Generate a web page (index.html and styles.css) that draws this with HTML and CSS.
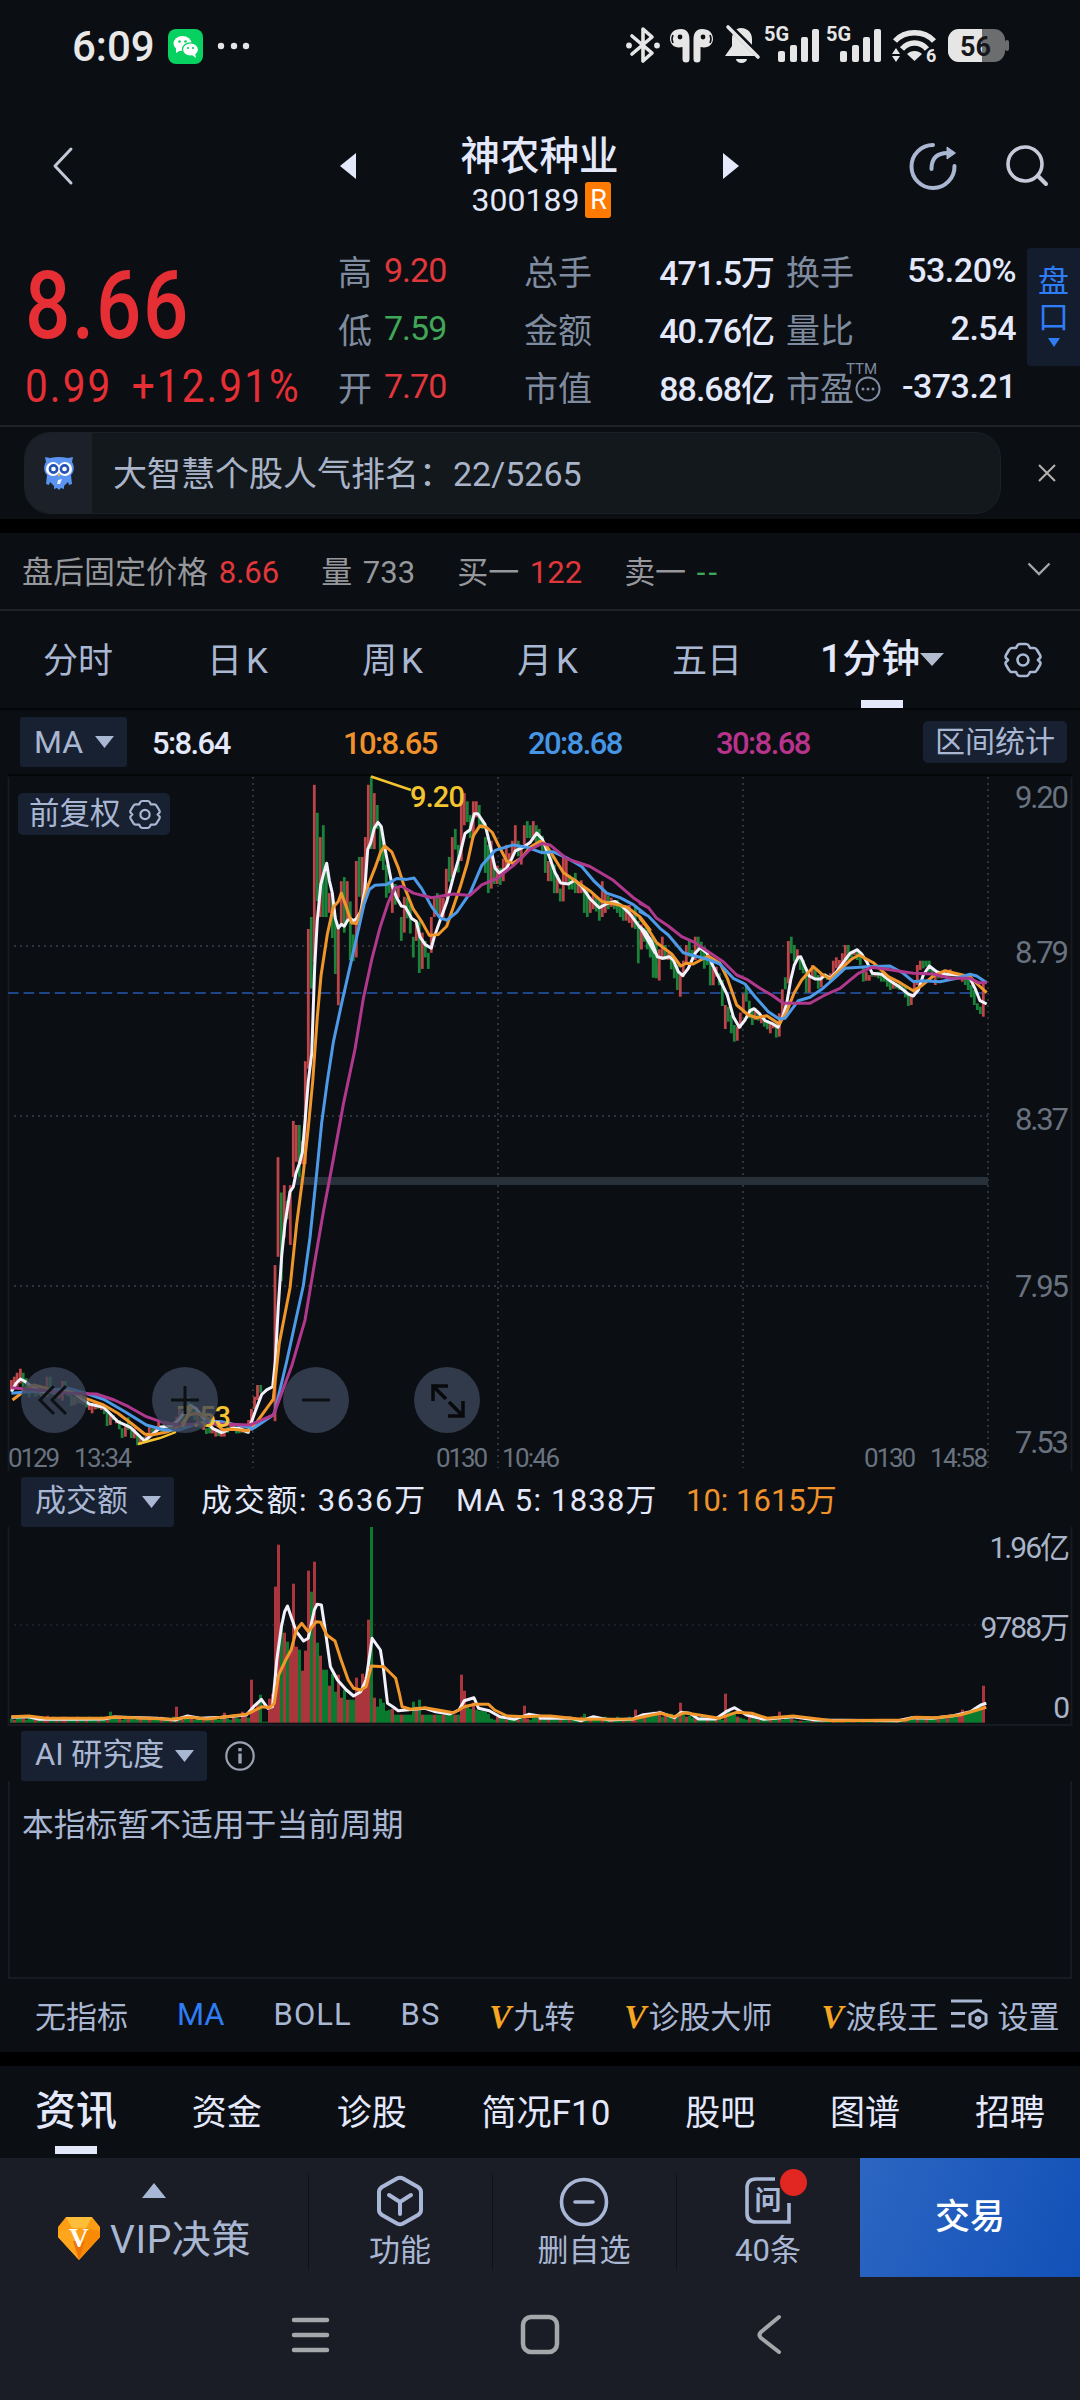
FILE: index.html
```html
<!DOCTYPE html>
<html lang="zh-CN">
  <head>
    <meta charset="UTF-8" />
    <title>神农种业 300189</title>
    <link rel="stylesheet" href="styles.css">
  </head>
  <body>
    <div class="status">
      <span class="clock">6:09</span>
      <svg class="wechat" width="35" height="35" viewBox="0 0 35 35">
        <rect width="35" height="35" rx="8" fill="#07d160"/>
        <ellipse cx="14.5" cy="14.5" rx="9" ry="7.5" fill="#fff"/>
        <path d="M8 19l0 5 5-3z" fill="#fff"/>
        <ellipse cx="22.5" cy="20.5" rx="8" ry="6.7" fill="#fff" stroke="#07d160" stroke-width="1.2"/>
        <path d="M24 26l4 3-1-5z" fill="#fff"/>
        <g fill="#07d160"><circle cx="11.5" cy="12.5" r="1.3"/><circle cx="17.5" cy="12.5" r="1.3"/><circle cx="20" cy="19" r="1.1"/><circle cx="25" cy="19" r="1.1"/></g>
      </svg>
      <svg class="dots" width="34" height="8" viewBox="0 0 34 8" fill="#e4e4e4"><circle cx="4" cy="4" r="3.2"/><circle cx="17" cy="4" r="3.2"/><circle cx="29" cy="4" r="3.2"/></svg>
      <svg class="sys" width="390" height="76" viewBox="624 8 390 76" fill="#e6e6e6">
        <path d="M632 36l20 17-9 8V29l9 8-20 17" fill="none" stroke="#e6e6e6" stroke-width="3.6" stroke-linejoin="round" stroke-linecap="round"/>
        <circle cx="629" cy="45.500" r="2.900"/><circle cx="657" cy="45.500" r="2.900"/>
        <path d="M681 29c6 0 8.500 4 8.500 11v19a3 3 0 0 1-7 0V47c-8 2-12.500-3-12.500-8 0-6 4-10 11-10zM702 29c-6 0-8.500 4-8.500 11v19a3 3 0 0 0 7 0V47c8 2 12.500-3 12.500-8 0-6-4-10-11-10z"/>
        <circle cx="680" cy="37" r="2.400" fill="#0b0e13"/><circle cx="703" cy="37" r="2.400" fill="#0b0e13"/>
        <path d="M673 35q-2 4 0 8M710 35q2 4 0 8" fill="none" stroke="#0b0e13" stroke-width="1.600"/>
        <path d="M741 28c7 0 11 5 11 11v9l6 8h-33l7-10v-7c0-6 3-11 9-11zM736 59h11a5.500 4 0 0 1-11 0z"/>
        <path d="M730 27l32 32" stroke="#0b0e13" stroke-width="6"/>
        <path d="M728 27l30 30" stroke="#e6e6e6" stroke-width="3.600" stroke-linecap="round"/>
        <text x="764" y="41" class="g5">5G</text><text x="826" y="41" class="g5">5G</text>
        <g id="bars"><rect x="778" y="51" width="7" height="11" rx="2"/><rect x="790" y="45" width="7" height="17" rx="2"/><rect x="801" y="37" width="7" height="25" rx="2"/><rect x="812" y="29" width="7" height="33" rx="2"/></g>
        <use href="#bars" x="62"/>
        <g fill="none" stroke="#e6e6e6" stroke-width="5.500"><path d="M895 41c10-11 29-11 39 0"/><path d="M902 49c7-8 18-8 25 0"/></g>
        <path d="M907 54c4-4 11-4 15 0l-7.500 7z"/>
        <path d="M896 48l4 6h-8zM896 62l4-6h-8z"/>
        <text x="926" y="62" class="w6">6</text>
        <rect x="948" y="29" width="57" height="33" rx="11" fill="#6c6d6f"/>
        <path d="M959 29h23v33h-23a11 11 0 0 1-11-11V40a11 11 0 0 1 11-11z"/>
        <rect x="1005" y="40" width="4" height="11" rx="2" fill="#6c6d6f"/>
        <text x="960" y="56" class="bat">56</text>
      </svg>
    </div>

    <div class="header">
      <svg class="back" width="24" height="40" viewBox="0 0 24 40"><path d="M20 3L4 20l16 17" fill="none" stroke="#c3c8d6" stroke-width="3" stroke-linecap="round" stroke-linejoin="round"/></svg>
      <svg width="16" height="26" viewBox="0 0 16 26"><path d="M16 0v26L0 13z" fill="#e3e8fb"/></svg>
      <div class="name">
        <h1>神农种业</h1>
        <p><span>300189</span><b>R</b></p>
      </div>
      <svg width="16" height="26" viewBox="0 0 16 26"><path d="M0 0v26l16-13z" fill="#e3e8fb"/></svg>
      <svg class="share" width="50" height="50" viewBox="0 0 50 50">
        <path d="M25 4A21.500 21.500 0 1 0 46.500 25" fill="none" stroke="#a9b7d2" stroke-width="4" stroke-linecap="round"/>
        <path d="M23.500 28c0-10 5-16 16-16" fill="none" stroke="#a9b7d2" stroke-width="4" stroke-linecap="round"/>
        <path d="M39 6l8.500 6-8.500 6z" fill="#a9b7d2" stroke="#a9b7d2" stroke-linejoin="round"/>
      </svg>
      <svg class="search" width="46" height="44" viewBox="0 0 46 44"><circle cx="21" cy="20" r="17" fill="none" stroke="#c9cad9" stroke-width="3.600"/><path d="M34 32l8 8" stroke="#c9cad9" stroke-width="4" stroke-linecap="round"/></svg>
    </div>

    <div class="quote">
      <div class="price">
        <div class="last">8.66</div>
        <div class="chg"><span>0.99</span><span>+12.91%</span></div>
      </div>
      <div class="col a">
        <p><i>高</i><b class="up">9.20</b></p>
        <p><i>低</i><b class="down">7.59</b></p>
        <p><i>开</i><b class="up">7.70</b></p>
      </div>
      <div class="col b">
        <p><i>总手</i><b>471.5万</b></p>
        <p><i>金额</i><b>40.76亿</b></p>
        <p><i>市值</i><b>88.68亿</b></p>
      </div>
      <div class="col c">
        <p><i>换手</i><b>53.20%</b></p>
        <p><i>量比</i><b>2.54</b></p>
        <p><i>市盈<svg class="ttm" width="36" height="52" viewBox="0 -6 36 52"><text x="0" y="12">TTM</text><circle cx="22" cy="27" r="11.500" fill="none" stroke="#7f8b9e" stroke-width="2"/><g fill="#7f8b9e"><circle cx="17" cy="27" r="1.500"/><circle cx="22" cy="27" r="1.500"/><circle cx="27" cy="27" r="1.500"/></g></svg></i><b>-373.21</b></p>
      </div>
      <div class="pankou"><span>盘</span><span>口</span><svg width="12" height="9" viewBox="0 0 12 9"><path d="M0 0h12L6 9z" fill="#2f7df6"/></svg></div>
    </div>

    <div class="banner">
      <div class="pill">
        <div class="owl">
          <svg width="32" height="34" viewBox="0 0 32 34">
            <path d="M2 1l5 1q9-2 18 0l5-1-1 5c3 5 2 10-1 13l1 9-3 1-1-3-4 4v3l-3-1-2 2-2-2-3 1v-3l-4-4-1 3-3-1 1-9C1 16 0 11 3 6z" fill="#5b93f0"/>
            <circle cx="10" cy="13" r="7" fill="#fff"/><circle cx="22" cy="13" r="7" fill="#fff"/>
            <circle cx="10.500" cy="13" r="3.600" fill="none" stroke="#2453b4" stroke-width="2.600"/><circle cx="21.500" cy="13" r="3.600" fill="none" stroke="#2453b4" stroke-width="2.600"/>
            <path d="M14.500 18h3l-1.500 3z" fill="#f3c14b"/><path d="M14 28l1-4 4-1-2 5z" fill="#e6efff"/>
          </svg>
        </div>
        <span>大智慧个股人气排名：22/5265</span>
      </div>
      <svg width="18" height="18" viewBox="0 0 18 18"><path d="M1 1l16 16M17 1L1 17" stroke="#b5b1ad" stroke-width="2"/></svg>
    </div>

    <div class="after">
      <span class="fix">盘后固定价格 <b class="up">8.66</b></span>
      <span>量 <b>733</b></span>
      <span>买一 <b class="up">122</b></span>
      <span>卖一 <b class="down dash">--</b></span>
      <svg width="24" height="14" viewBox="0 0 24 14"><path d="M1.500 1.500L12 12 22.500 1.500" fill="none" stroke="#a3a5a8" stroke-width="2.400"/></svg>
    </div>

    <div class="periods">
      <span>分时</span><span>日<em>K</em></span><span>周<em>K</em></span><span>月<em>K</em></span><span>五日</span>
      <span class="on">1分钟<svg width="24" height="13" viewBox="0 0 24 13"><path d="M0 0h24L12 13z" fill="#b3bccf"/></svg></span>
      <svg class="gear" width="38" height="36" viewBox="0 0 38 36"><use href="#gear"/></svg>
    </div>

    <div class="legend">
      <span class="tag"><em>MA</em><svg width="19" height="12" viewBox="0 0 19 12"><path d="M0 0h19L9.500 12z" fill="#a9b7d2"/></svg></span>
      <b class="m5">5:8.64</b><b class="m10">10:8.65</b><b class="m20">20:8.68</b><b class="m30">30:8.68</b>
      <span class="range">区间统计</span>
    </div>

    <div class="kline">
      <svg id="kline" width="1080" height="702" viewBox="0 773 1080 702">
        <defs>
          <g id="gear" fill="none" stroke="#a9b7d2" stroke-width="2.600" stroke-linejoin="round">
            <path d="M16 2h6q2 0 3 2l1 2 4 0q2 0 3 2l3 5q1 2 0 3l-2 2 2 2q1 1 0 3l-3 5q-1 2-3 2h-4l-1 2q-1 2-3 2h-6q-2 0-3-2l-1-2H8q-2 0-3-2l-3-5q-1-2 0-3l2-2-2-2q-1-1 0-3l3-5q1-2 3-2h4l1-2q1-2 3-2z"/><circle cx="19" cy="18" r="5.500"/>
          </g>
        </defs>
        <path d="M8 775H1072" stroke="#050608" stroke-width="2"/>
        <path d="M8.500 777V1471M1071.500 777V1471" stroke="#171b21" stroke-width="2"/>
        <g stroke="#30343a" stroke-width="2" stroke-dasharray="2 4">
          <path d="M14 946H988M14 1116H988M14 1286H988"/>
          <path d="M253 777V1468M498 777V1468M743 777V1468M988 777V1468"/>
        </g>
        <path d="M8 993H988" stroke="#204488" stroke-width="2.200" stroke-dasharray="10.600 5"/>
        <g id="candles"></g>
        <rect x="295" y="1177" width="693" height="8" fill="#28303a"/>
        <g id="mas" fill="none" stroke-width="3" stroke-linejoin="round"></g>
        <g class="mark">
          <path d="M371 776.500L411 790M138 1444l22-6 16-6" fill="none" stroke="#f4c430" stroke-width="2.400"/>
          <text x="410" y="807" textLength="55">9.20</text>
          <text x="177" y="1427" textLength="54">7.53</text>
        </g>
        <g class="axis">
          <text x="1015" y="808" textLength="54">9.20</text>
          <text x="1015" y="963" textLength="54">8.79</text>
          <text x="1015" y="1130" textLength="54">8.37</text>
          <text x="1015" y="1297" textLength="54">7.95</text>
          <text x="1015" y="1453" textLength="54">7.53</text>
        </g>
        <g class="time">
          <text x="8" y="1467" textLength="52">0129</text><text x="74" y="1467" textLength="58">13:34</text>
          <text x="436" y="1467" textLength="52">0130</text><text x="502" y="1467" textLength="58">10:46</text>
          <text x="864" y="1467" textLength="52">0130</text><text x="930" y="1467" textLength="58">14:58</text>
        </g>
        <g fill="#3c465b" fill-opacity=".78">
          <circle cx="54" cy="1400" r="33"/><circle cx="185" cy="1400" r="33"/><circle cx="316" cy="1400" r="33"/><circle cx="447" cy="1400" r="33"/>
        </g>
        <g fill="none" stroke="#0d1015" stroke-width="3">
          <path d="M54 1386l-14 14 14 14M66 1386l-14 14 14 14M171 1400h28M185 1386v28M302 1400h28"/>
          <path d="M433 1401v-15h15M434 1387l12 12M448 1416h15v-15M462 1415l-13-13" stroke="#08090b" stroke-width="3.500"/>
        </g>
      </svg>
      <span class="fuquan">前复权<svg width="32" height="31" viewBox="0 0 38 36"><use href="#gear"/></svg></span>
    </div>

    <div class="sub">
      <span class="tag"><em>成交额</em><svg width="19" height="12" viewBox="0 0 19 12"><path d="M0 0h19L9.500 12z" fill="#a9b7d2"/></svg></span>
      <span class="v1">成交额: 3636万</span><span class="v2">MA 5: 1838万</span><span class="v3">10: 1615万</span>
    </div>
    <svg class="vol" width="1080" height="202" viewBox="0 1527 1080 202">
      <path d="M8.500 1527V1725H1071.500V1527" fill="none" stroke="#171b21" stroke-width="2"/>
      <path d="M14 1625H988" stroke="#1c2026" stroke-width="2" stroke-dasharray="2 4"/>
      <g id="volumes"></g>
      <g id="volmas" fill="none" stroke-width="3" stroke-linejoin="round"></g>
      <g class="vaxis">
        <text x="1068" y="1558" text-anchor="end">1.96亿</text>
        <text x="1068" y="1638" text-anchor="end">9788万</text>
        <text x="1068" y="1718" text-anchor="end">0</text>
      </g>
    </svg>

    <div class="sub ai">
      <span class="tag"><em>AI 研究度</em><svg width="19" height="12" viewBox="0 0 19 12"><path d="M0 0h19L9.500 12z" fill="#a9b7d2"/></svg></span>
      <svg class="info" width="32" height="32" viewBox="0 0 32 32"><circle cx="16" cy="16" r="13.700" fill="none" stroke="#9aa2b1" stroke-width="2.200"/><path d="M16 13.500v10M16 8v3.200" stroke="#9aa2b1" stroke-width="3.400"/></svg>
    </div>
    <div class="empty">本指标暂不适用于当前周期</div>

    <div class="indicators">
      <span>无指标</span><span class="on">MA</span><span class="en">BOLL</span><span class="en">BS</span>
      <span><b>V</b>九转</span><span><b>V</b>诊股大师</span><span><b>V</b>波段王</span>
      <span class="set"><svg width="40" height="32" viewBox="0 0 40 32" fill="none" stroke="#a9b7d2" stroke-width="3"><path d="M1 3h31M1 15.500h14M1 28h14"/><path d="M28 12l8 4.500v9L28 30l-8-4.500v-9z" stroke-linejoin="round"/><circle cx="28" cy="21" r="1.800"/></svg>设置</span>
    </div>

    <div class="news">
      <span class="on">资讯</span><span>资金</span><span>诊股</span><span>简况F10</span><span>股吧</span><span>图谱</span><span>招聘</span>
    </div>

    <div class="actions">
      <div class="vip">
        <svg width="24" height="15" viewBox="0 0 24 15"><path d="M12 0l12 15H0z" fill="#a9b7d6"/></svg>
        <p>
          <svg width="44" height="43" viewBox="0 0 44 43"><path d="M9 0h26l8 10v10L22 43 1 20V10z" fill="#ff9d14"/><path d="M9 0h26l-6 11H15z" fill="#ffbe3a"/><path d="M1 14l14-3 7 32L1 20z" fill="#ffa61d"/><path d="M43 14l-14-3-7 32 21-23z" fill="#f98a05"/><path d="M16 24l6 19 6-19z" fill="#ef7408"/><text x="22" y="30" text-anchor="middle">V</text></svg>
          <span>VIP决策</span>
        </p>
      </div>
      <div class="act">
        <svg width="50" height="52" viewBox="0 0 50 52" fill="none" stroke="#a9b7d6" stroke-width="4" stroke-linejoin="round" stroke-linecap="round"><path d="M22 3.500q3-1.500 6 0l15 8.500q3 2 3 5v18q0 3-3 5l-15 8.500q-3 1.500-6 0L7 40q-3-2-3-5V17q0-3 3-5z"/><path d="M14 20l11 7 11-7M25 27v12"/></svg>
        功能
      </div>
      <div class="act">
        <svg width="50" height="52" viewBox="0 0 50 52" fill="none" stroke="#a9b7d6" stroke-width="3.600" stroke-linecap="round"><circle cx="25" cy="27" r="22.500"/><path d="M16 27h18"/></svg>
        删自选
      </div>
      <div class="act">
        <svg width="50" height="52" viewBox="0 0 50 52"><path d="M32 4H13Q4 4 4 13v25q0 9 9 9h33V28" fill="none" stroke="#a9b7d6" stroke-width="3.600"/><text x="25" y="35" text-anchor="middle">问</text></svg>
        <i class="dot"></i>
        40条
      </div>
      <div class="trade">交易</div>
    </div>

    <div class="nav">
      <svg width="500" height="50" viewBox="286 2309 500 50" fill="none" stroke="#a6a7aa" stroke-width="4.500" stroke-linecap="round" stroke-linejoin="round">
        <path d="M294 2319h33M294 2334h33M294 2349h33"/>
        <rect x="523" y="2316" width="34" height="35" rx="8"/>
        <path d="M779 2316l-18 15q-3 3 0 6l18 14" stroke-width="4"/>
      </svg>
    </div>
    <script src="script.js"></script>
  </body>
</html>
```
FILE: styles.css
```css
* {
  box-sizing: border-box;
}
body {
  margin: 0;
  width: 1080px;
  height: 2400px;
  overflow: hidden;
  background: #0b0e13;
  color: #a9b7d2;
  font-family: Roboto, "Noto Sans CJK SC", sans-serif;
  font-size: 31px;
}
p, h1 {
  margin: 0;
}
b, i, em {
  font-weight: normal;
  font-style: normal;
}
svg {
  display: block;
  flex: none;
}
.up {
  color: #e0373b;
}
.down {
  color: #3fa757;
}

/* status bar */
.status {
  height: 92px;
  display: flex;
  align-items: center;
  padding-left: 72px;
}
.clock {
  width: 96px;
  font-size: 42px;
  font-weight: 500;
  color: #e8e8e8;
}
.dots {
  margin-left: 14px;
}
.sys {
  margin-left: auto;
  margin-right: 66px;
}
.g5 {
  font-size: 20px;
  font-weight: 700;
}
.w6 {
  font-size: 18px;
  font-weight: 700;
}
.bat {
  font-size: 27px;
  font-weight: 700;
  fill: #15171a;
}

/* title */
.header {
  height: 148px;
  display: flex;
  align-items: center;
  padding: 0 30px 0 51px;
}
.header .back {
  margin-right: 265px;
}
.name {
  width: 367px;
  padding-top: 20px;
  text-align: center;
}
.name h1 {
  font-size: 39.500px;
  line-height: 48px;
  font-weight: 500;
  color: #e3e8fb;
}
.name p {
  display: flex;
  justify-content: center;
  align-items: center;
  gap: 6px;
  height: 38px;
  padding-left: 4px;
  font-size: 32px;
  color: #e3e8fb;
}
.name p b {
  width: 26px;
  height: 36px;
  line-height: 37px;
  font-size: 27px;
  border-radius: 3px;
  background: #ff7a00;
  color: #fff;
}
.header .share {
  margin-left: auto;
  margin-right: 46px;
}

/* quote */
.quote {
  height: 187px;
  display: flex;
  border-bottom: 2px solid #1f2226;
}
.price {
  width: 338px;
  padding-left: 25px;
  color: #e52f35;
}
.last {
  height: 116px;
  padding-top: 14px;
  line-height: 104px;
  font-size: 94px;
  font-weight: 500;
  letter-spacing: 2px;
  transform: scaleX(.85);
  transform-origin: left;
}
.chg {
  display: flex;
  gap: 22px;
  padding-top: 1px;
  line-height: 58px;
  font-size: 46px;
  letter-spacing: 2.400px;
  transform: scaleX(.88);
  transform-origin: left;
}
.col p {
  display: flex;
  height: 58px;
  align-items: center;
}
.col {
  margin-top: 1px;
  font-size: 34px;
}
.col i {
  color: #7f8b9e;
  display: flex;
}
.col b {
  font-size: 34px;
  letter-spacing: -1px;
}
.a {
  width: 186px;
}
.a b {
  margin-left: 12px;
}
.b, .c {
  color: #e3e8fb;
}
.b p, .c p {
  justify-content: space-between;
}
.b b, .c b {
  font-weight: 500;
}
.b {
  width: 250px;
  margin-right: 12px;
}
.c {
  width: 230px;
}
.c b {
  letter-spacing: -.500px;
}
.ttm {
  margin: -6px -16px 0 -8px;
  font-size: 15px;
  fill: #7f8b9e;
}
.pankou {
  width: 53px;
  height: 118px;
  margin: 8px 0 0 11px;
  padding-top: 13px;
  display: flex;
  flex-direction: column;
  align-items: center;
  background: #141d2e;
  border-radius: 4px 0 0 4px;
  color: #2f7df6;
  font-size: 31px;
  line-height: 42px;
}
.pankou span {
  height: 36px;
}
.pankou svg {
  margin-top: 5px;
}

/* banner */
.banner {
  height: 106px;
  display: flex;
  padding: 5px 24px 0 24px;
  border-bottom: 14px solid #000;
}
.banner > svg {
  margin: 32px 0 0 37px;
}
.pill {
  width: 977px;
  height: 82px;
  display: flex;
  align-items: center;
  background: #13181c;
  border: 1px solid #1b2026;
  border-radius: 26px;
  overflow: hidden;
  font-size: 34px;
  color: #a9b4c9;
}
.pill > span {
  margin-top: -4px;
}
.owl {
  width: 67px;
  height: 82px;
  margin-right: 21px;
  display: flex;
  align-items: center;
  justify-content: center;
  background: #1b2029;
}

/* after-hours trading */
.after {
  height: 78px;
  display: flex;
  align-items: center;
  gap: 42px;
  padding: 0 29px 4px 22px;
  border-bottom: 2px solid #1f2226;
  color: #96989c;
}
.after b {
  margin-left: 3px;
}
.after .dash {
  letter-spacing: 3px;
}
.after svg {
  margin-left: auto;
}

/* period tabs */
.periods {
  height: 99px;
  display: flex;
  align-items: center;
  gap: 94px;
  padding-left: 43px;
  border-bottom: 2px solid #050608;
  font-size: 35px;
  white-space: nowrap;
}
.periods > span {
  flex: none;
  margin-top: -4px;
}
.periods em {
  margin-left: 4px;
}
.periods .on {
  height: 97px;
  line-height: 97px;
  display: flex;
  align-items: center;
  position: relative;
  margin: 0 0 0 -16px;
  font-size: 39px;
  font-weight: 500;
  color: #e3e8fb;
}
.periods .gear {
  margin-left: -34px;
}
.periods .on::after, .news .on::after {
  content: "";
  position: absolute;
  bottom: 0;
  left: 50%;
  width: 42px;
  height: 8px;
  margin-left: -21px;
  background: #e3e8fb;
}

/* MA legend */
.legend {
  height: 63px;
  display: flex;
  align-items: center;
  padding: 0 13px 0 20px;
}
.legend b {
  margin-top: 3px;
  font-size: 31px;
  font-weight: 500;
  letter-spacing: -1.600px;
}
.legend .tag {
  width: 107px;
  font-size: 32px;
}
.tag {
  height: 50px;
  display: flex;
  align-items: center;
  justify-content: space-between;
  padding: 0 13px 0 14px;
  background: #182132;
  border-radius: 3px;
}
.m5 {
  width: 191px;
  margin-left: 25px;
  color: #e3e8fb;
}
.m10 {
  width: 185px;
  color: #f0922b;
}
.m20 {
  width: 188px;
  color: #4696e6;
}
.m30 {
  color: #b8348c;
}
.range {
  width: 144px;
  height: 42px;
  line-height: 41px;
  margin-left: auto;
  text-align: center;
  background: #182132;
  border-radius: 5px;
  font-size: 30px;
}

/* charts */
.kline {
  position: relative;
  height: 702px;
}
.fuquan {
  position: absolute;
  left: 18px;
  top: 20px;
  width: 152px;
  height: 42px;
  line-height: 38px;
  display: flex;
  align-items: center;
  gap: 8px;
  padding-left: 11px;
  background: #182132;
  border-radius: 5px;
  font-size: 30.500px;
}
.mark {
  font-size: 29px;
  font-weight: 500;
  fill: #f4c430;
}
.axis {
  font-size: 31px;
  fill: #69727f;
}
.time {
  font-size: 26px;
  fill: #69727f;
}
.vaxis {
  font-size: 30px;
  letter-spacing: -2px;
  fill: #a9b4c9;
}
.sub {
  height: 52px;
  display: flex;
  align-items: center;
  padding: 2px 0 0 21px;
}
.sub > span {
  line-height: 48px;
}
.sub .tag {
  width: 153px;
}
.v1, .v2 {
  color: #e3e8fb;
}
.v1 {
  width: 255px;
  margin-left: 27px;
  letter-spacing: 1.700px;
}
.v2 {
  width: 230px;
  letter-spacing: 1.200px;
}
.v3 {
  color: #f0922b;
}
.sub em {
  margin-top: -3px;
}
.v1, .v2, .v3 {
  margin-top: -3px;
}
.ai .tag {
  width: 186px;
}
.info {
  margin-left: 17px;
}
.empty {
  height: 198px;
  margin: 0 8px;
  padding: 18px 12px;
  border: 2px solid #171b21;
  border-top: 0;
  font-size: 31.800px;
}

/* indicator picker */
.indicators {
  height: 87px;
  display: flex;
  align-items: center;
  gap: 49px;
  padding: 0 22px 3px 35px;
  border-bottom: 14px solid #000;
  white-space: nowrap;
}
.indicators .on {
  color: #2f7df6;
}
.en {
  letter-spacing: 1px;
}
.indicators b {
  margin-right: 2px;
  font: italic bold 33px "Liberation Serif", serif;
  color: #f5a623;
}
.indicators .set {
  display: flex;
  align-items: center;
  gap: 7px;
  margin-left: -37px;
}

/* news tabs */
.news {
  height: 92px;
  display: flex;
  align-items: center;
  justify-content: space-between;
  padding: 0 35px 5px;
  font-size: 35px;
  color: #e3e8fb;
}
.news .on {
  position: relative;
  height: 88px;
  line-height: 90px;
  margin-bottom: -1px;
  font-size: 41px;
  font-weight: 500;
}

/* bottom bar */
.actions {
  height: 119px;
  display: flex;
  background: #1a1d26;
}
.vip {
  width: 308px;
  padding-top: 25px;
}
.vip > svg {
  margin: 0 auto;
}
.vip p {
  display: flex;
  align-items: center;
  gap: 9px;
  height: 80px;
  padding-left: 57px;
  font-size: 39px;
}
.vip span {
  margin-top: -5px;
  letter-spacing: .600px;
}
.vip text {
  font: bold 27px "Liberation Serif", serif;
  fill: #fff;
}
.act {
  width: 184px;
  position: relative;
  display: flex;
  flex-direction: column;
  align-items: center;
  padding-top: 17px;
  line-height: 48px;
}
.act::before {
  content: "";
  position: absolute;
  left: 0;
  top: 16px;
  width: 1px;
  height: 96px;
  background: #0f1218;
}
.act text {
  font-size: 27px;
  font-weight: 700;
  fill: #a9b7d6;
}
.dot {
  position: absolute;
  left: 104px;
  top: 11px;
  width: 27px;
  height: 27px;
  border-radius: 50%;
  background: #e22622;
}
.trade {
  flex: 1;
  line-height: 119px;
  text-align: center;
  font-size: 35px;
  font-weight: 500;
  color: #fff;
  background: linear-gradient(110deg, #2d66c2, #1251b8);
}
.nav {
  height: 124px;
  padding: 33px 0 0 286px;
  background: #1a1d26;
}
```
FILE: script.js
```js
// every segment: [origin x, origin y, x units per px, y units per px, data]
const UP = "#bb4549";
const DOWN = "#1a823a";

const candles = [
  [0, 1120, 2.8, 3, `32 780 810 r,40 770 805 r,48 758 800 r,57 746 790 r,65 758 800 g,74 775 810 g,82 790 832 g,91 795 820 r,99 800 830 g,108 800 825 r,116 805 832 g,124 800 825 r,132 770 830 r,141 770 810 g,150 795 825 g,158 805 830 g,166 810 835 r,175 783 842 r,183 783 820 g,192 805 830 g,200 825 858 g,208 830 855 r,216 818 850 g,225 830 850 r,233 835 855 g,242 845 862 g,250 850 870 r,258 850 880 r,267 850 868 r,275 852 866 g,284 855 870 r,292 858 882 g,300 880 918 g,309 885 915 r,317 885 900 g,326 895 910 r,334 900 928 g,342 925 954 g,351 920 950 r,359 892 930 g,368 930 954 g,376 925 955 r,385 945 976 g,393 955 975 r,402 950 968 g,410 940 960 r,418 915 945 r,427 925 942 g,435 918 935 r,444 902 932 r,452 915 935 g,460 910 925 r,469 905 930 g,478 912 930 r,486 905 925 g,495 890 925 r,503 860 905 r,512 870 900 g,520 855 885 r,528 832 870 g,537 850 885 g,545 870 900 g,553 885 910 r,562 890 925 g,570 900 930 r,578 925 942 g,587 915 940 g,595 920 940 r,604 925 950 r,612 928 948 g,620 930 950 r,628 925 950 r,637 920 938 g,646 915 932 r,654 910 930 r,662 920 940 g,670 925 940 g,679 920 938 r,687 920 940 g,696 900 935 r,704 867 915 r,713 830 867 r,721 795 840 r,730 795 818 g`],
  [240, 760, 3, 2.178, `105 1100 1440 r,114 865 1082 r,124 942 1135 g,133 926 1040 r,142 960 1000 g,151 926 1056 r,160 786 908 r,169 795 875 r,178 795 908 g,187 830 880 r,196 656 880 r,205 368 672 r,214 342 498 g,223 54 440 r,232 115 307 g,241 168 342 r,250 142 342 g,259 238 342 g,268 290 333 r,277 290 388 g,286 340 466 g,295 360 534 r,304 264 360 r,313 255 376 g,322 264 350 r,331 308 436 g,340 380 438 g,349 220 430 r,358 211 298 g,367 211 325 r,376 168 285 r,385 54 194 r,394 36 194 g,403 72 194 r,412 98 150 g,421 140 220 g,430 180 240 g,439 228 300 g,448 265 290 g,457 260 333 r,466 270 315 g,475 275 300 r,484 342 394 g,493 298 376 r,502 300 345 g,511 315 378 g,520 385 430 g,529 350 394 r,538 352 464 g,547 376 455 r,556 394 430 g,565 420 455 g,574 342 420 r,583 298 342 r,592 290 333 g,601 300 340 r,610 300 345 r,619 237 300 r,628 211 265 g,637 168 255 r,646 150 195 g,655 185 245 g,664 90 220 r,673 72 142 r,682 90 135 g,691 120 170 g,700 90 170 r,709 90 125 r,718 98 145 g,727 130 150 g,736 168 246 g,745 185 290 g,754 176 280 r,763 225 270 g,772 230 270 r,781 235 272 g,790 215 264 r,799 185 240 r,808 203 225 r,817 176 215 r,826 142 200 r,835 176 210 g,844 185 228 r,853 142 185 r,862 133 170 g,871 142 170 g,880 133 175 r,889 142 185 g,898 150 185 g,907 165 200 g,916 190 246 g,925 220 264 r,934 210 264 g,943 228 290 g,952 250 290 r,961 280 308 g,970 211 308 r,979 215 270 r,988 250 282 g,997 255 282 g,1006 246 290 g,1015 265 290 r,1024 262 290 r,1033 285 333 g,1042 285 342 g,1051 298 333 r,1060 290 325 r,1069 298 330 g,1078 305 350 g,1087 264 342 r,1096 285 333 r,1105 295 325 g,1114 300 320 r,1123 305 325 g,1132 305 333 g,1141 312 342 g,1150 316 350 g,1159 322 350 r,1168 316 355 r,1177 335 365 r,1186 316 368 g,1195 350 404 g,1204 358 412 r,1213 365 395 g,1222 370 410 g,1231 385 430 g,1240 385 474 g,1249 400 474 g`],
  [640, 760, 3, 3, `-5 540 610 g,4 518 568 r,13 505 545 g,22 540 568 g,31 555 590 g,40 580 650 g,49 613 655 g,58 568 662 r,67 530 600 r,76 555 600 g,85 580 600 r,94 580 628 g,103 600 655 g,112 615 690 g,121 645 710 r,130 602 650 r,139 555 615 r,148 543 590 g,157 570 600 g,166 530 600 r,175 530 570 g,184 545 590 g,193 560 626 g,202 590 615 g,211 605 676 g,220 625 676 r,229 620 650 r,238 640 676 g,247 660 738 g,256 735 807 r,265 740 785 g,274 765 820 g,283 795 845 g,292 800 842 r,301 758 805 r,310 700 760 r,319 676 725 g,328 722 775 g,337 745 795 g,346 745 780 r,355 758 782 g,364 765 790 r,373 770 800 g,382 780 808 g,391 790 820 r,400 790 805 r,409 790 833 g,418 760 830 r,427 688 780 r,436 652 688 g,445 543 670 r,454 530 580 g,463 555 605 g,472 568 600 r,481 590 630 g,490 600 640 g,499 635 698 g,508 650 698 r,517 615 650 r,526 628 660 g,535 645 686 g,544 640 682 r,553 640 655 g,562 645 660 g,571 640 662 r,580 602 650 r,589 592 625 r,598 600 640 r,607 580 620 r,616 555 615 r,625 555 602 g,634 575 592 g,643 570 585 r,652 572 600 g,661 590 615 g,670 620 665 g,679 635 662 r,688 645 662 r,697 635 650 g,706 640 650 r,715 635 655 g,724 640 665 g,733 650 665 g,742 650 680 g,751 665 690 g,760 670 686 r,769 670 686 g,778 672 690 g,787 676 690 g,796 680 712 g,805 700 738 g,814 705 735 r,823 660 700 r,832 615 675 r,841 602 630 r,850 602 625 g,859 602 620 g,868 602 635 g,877 625 650 g,886 645 675 r,895 640 655 g,904 640 655 r,913 635 650 r,922 638 650 g,931 628 650 r,940 638 650 g,949 640 655 g,958 645 655 r,967 645 665 r,976 650 675 g,985 655 690 g,994 675 712 g,1003 690 735 g,1012 730 750 g,1021 740 762 g,1030 665 770 r`]
];

const mas = {
  "#f1f0fb": [
    [0, 1120, 2.8, 3, "32 815,45 790,57 777,68 783,90 800,115 815,150 815,190 812,215 825,250 852,290 862,330 905,365 922,405 963,430 940,450 922,480 918,500 900,520 872,532 857,548 865,570 895,595 925,620 938,650 925,670 925,695 937"],
    [240, 760, 3, 2.178, "33 1445,45 1420,65 1382,80 1372,98 1365,106 1310,115 1190,125 1080,135 1010,150 940,160 930,168 900,178 880,187 855,196 780,205 700,215 640,224 450,232 350,242 272,250 250,260 225,268 262,277 290,286 345,295 366,304 358,313 362,322 350,331 345,340 350,350 345,362 330,374 285,383 195,392 180,403 148,414 136,424 145,434 190,446 235,457 275,470 300,484 318,496 320,515 345,529 352,540 385,556 402,574 410,583 385,600 350,620 310,640 255,660 205,675 160,690 152,703 117,713 117,735 140,750 185,765 235,778 246,800 235,815 215,826 198,850 190,870 180,890 159,907 172,925 205,945 245,962 268,985 270,1005 262,1025 275,1050 302,1078 322,1100 313,1125 308,1145 318,1170 335,1200 365,1225 385,1245 420"],
    [640, 760, 3, 3, "0 500,15 515,35 545,52 590,68 595,88 590,100 600,115 635,128 647,145 625,165 580,181 563,200 578,220 620,240 660,262 705,280 770,298 802,315 780,330 752,342 746,358 760,375 782,395 790,414 802,430 765,440 730,452 660,463 615,475 592,482 590,495 620,508 648,525 657,542 657,555 645,570 655,590 635,615 600,630 580,652 569,665 582,680 605,697 640,725 643,750 662,780 682,805 702,820 708,835 690,850 645,868 618,890 635,915 642,960 645,990 655,1005 685,1020 722,1040 732"]
  ],
  "#f0962a": [
    [0, 1120, 2.8, 3, "35 840,57 822,70 808,95 795,125 803,160 818,200 815,240 835,290 855,330 880,370 912,405 942,425 945,470 935,500 920,530 885,550 880,575 890,600 908,625 930,650 928,695 932,720 905,765 838"],
    [240, 760, 3, 2.178, "106 1350,118 1270,150 1150,170 1010,190 900,205 800,218 700,232 560,243 470,262 380,280 320,295 308,304 290,318 318,335 355,350 356,365 325,385 272,405 235,422 200,434 187,455 200,475 235,495 280,520 325,545 352,568 382,595 380,620 362,640 320,660 278,682 225,700 165,720 143,740 147,757 158,775 185,800 220,818 225,845 213,870 190,900 177,915 182,940 210,970 245,1010 265,1050 285,1085 308,1120 313,1160 320,1200 342,1230 370"],
    [640, 760, 3, 3, "0 475,20 500,50 548,95 582,122 618,138 610,160 612,205 588,240 610,262 655,290 735,325 765,350 773,380 767,400 780,418 792,440 755,462 700,485 660,520 620,545 642,570 657,600 630,635 597,657 585,700 608,745 650,780 668,820 692,845 677,880 648,915 632,955 642,990 650,1015 675,1040 698"]
  ],
  "#4d9be8": [
    [0, 1120, 2.8, 3, "32 820,80 815,130 812,190 805,240 820,290 838,350 875,410 915,460 930,500 930,540 915,580 903,620 905,650 912,700 922,705 928,765 885"],
    [240, 760, 3, 2.178, "104 1420,140 1310,190 1145,210 1040,230 900,245 790,262 700,280 615,305 530,330 450,352 380,372 315,388 282,405 273,440 271,470 258,500 260,522 257,545 280,575 320,600 344,620 349,650 332,690 290,725 230,765 197,820 185,860 190,905 202,940 200,985 215,1025 232,1060 262,1100 290,1140 300,1180 315,1220 338"],
    [640, 760, 3, 3, "0 455,25 468,60 505,85 525,130 578,165 588,200 597,240 612,280 655,315 672,345 710,385 755,418 777,435 775,475 722,510 712,545 688,575 662,615 625,680 620,750 618,790 640,820 665,850 662,900 665,950 655,990 643,1010 648,1040 668"]
  ],
  "#b0398d": [
    [0, 1120, 2.8, 3, "32 803,80 808,130 812,190 820,270 822,320 840,360 860,410 890,450 905,500 915,560 912,620 912,700 915,765 885"],
    [240, 760, 3, 2.178, "104 1420,155 1320,195 1220,225 1090,250 985,280 870,310 750,345 630,370 520,395 435,420 365,445 310,465 278,485 275,520 290,575 300,640 292,690 295,725 272,770 258,820 230,870 195,905 182,930 185,980 215,1050 232,1120 262,1180 300,1225 322"],
    [640, 760, 3, 3, "0 430,25 442,50 475,85 498,125 530,165 548,205 575,250 605,290 645,320 658,360 685,395 705,430 730,510 730,555 705,600 685,655 640,695 622,740 628,820 640,880 642,930 655,990 655,1015 668,1040 668"]
  ]
};

const volMas = {
  "#f1f0fb": [
    [0, 1460, 2.8, 3, "32 772,80 770,110 778,200 778,290 777,320 771,440 775,490 780,525 768,560 775,620 772,690 765,710 740,732 718,750 745,763 740,775 600,788 500,797 455,805 438,815 470,830 515,850 543,863 535,880 450,888 433,900 435,912 520,925 620,945 660,970 690,990 708,1010 695,1025 660,1042 535,1065 570,1074 630,1085 730,1100 740,1115 752,1190 745,1220 755,1260 762,1285 750,1300 722,1327 713,1340 745,1370 752,1400 770,1440 778,1480 763,1510 768"],
    [540, 1400, 2.904, 3, "0 955,90 955,120 962,155 950,200 960,270 957,300 944,350 938,390 953,410 937,435 940,460 957,510 957,540 935,565 923,600 945,650 958,735 950,800 960,1040 962,1080 953,1140 955,1200 947,1250 935,1280 915,1296 910"]
  ],
  "#f0962a": [
    [0, 1460, 2.8, 3, "32 770,80 768,130 775,290 775,320 771,480 778,530 772,580 777,690 763,735 740,755 743,768 730,780 645,800 600,815 570,830 510,845 490,863 515,885 485,898 487,915 525,938 543,955 600,975 660,990 685,1010 690,1025 680,1040 618,1075 620,1108 655,1118 700,1126 740,1150 748,1190 743,1270 758,1300 740,1330 733,1368 733,1385 750,1420 768,1470 770"],
    [540, 1400, 2.904, 3, "0 948,30 948,120 958,270 957,350 940,390 950,420 938,480 948,520 955,570 937,615 940,660 955,735 948,850 962,1060 960,1090 952,1150 953,1220 945,1270 930,1296 922"]
  ]
};

// one volume bar per 3px column: column index -> [height, colour]
const BASE = 1722.7;
const volumes = {
  36: [11, "g"], 58: [16, "r"], 15: [7, "r"], 20: [6, "r"], 74: [10, "r"], 80: [11, "r"], 83: [43, "r"], 84: [14, "r"],
  85: [19, "r"], 86: [28, "g"], 87: [1, "g"], 88: [1, "g"], 89: [24, "r"], 90: [29, "r"],
  91: [136, "r"], 92: [178, "r"], 93: [100, "g"], 94: [90, "r"], 95: [81, "g"], 96: [71, "r"], 97: [139, "r"],
  98: [76, "r"], 99: [73, "g"], 100: [52, "r"], 101: [72, "r"], 102: [152, "r"], 103: [131, "g"], 104: [161, "r"],
  105: [80, "g"], 106: [67, "r"], 107: [53, "g"], 108: [53, "g"], 109: [37, "r"], 110: [49, "g"], 111: [31, "g"],
  112: [48, "r"], 113: [25, "r"], 114: [33, "g"], 115: [23, "r"], 116: [23, "g"], 117: [23, "g"], 118: [45, "r"],
  119: [33, "r"], 120: [49, "r"], 121: [46, "r"], 122: [103, "r"], 123: [196, "g"], 124: [25, "r"], 125: [16, "g"],
  126: [24, "g"], 127: [20, "g"], 128: [12, "g"], 129: [13, "g"], 130: [14, "r"], 131: [8, "g"], 132: [8, "g"],
  137: [21, "g"], 138: [16, "r"], 139: [23, "g"], 153: [48, "r"], 154: [32, "r"], 155: [18, "g"], 156: [14, "g"],
  157: [20, "r"], 158: [13, "g"], 159: [12, "g"], 160: [12, "g"], 161: [11, "g"], 162: [9, "g"],
  174: [17, "r"], 194: [9, "g"], 211: [13, "r"], 217: [11, "g"], 219: [12, "r"], 226: [20, "r"], 241: [29, "r"],
  242: [12, "g"], 243: [10, "g"], 244: [10, "g"], 259: [11, "r"], 320: [13, "r"], 321: [9, "g"], 322: [10, "g"],
  323: [12, "g"], 324: [15, "g"], 325: [17, "g"], 326: [18, "g"], 327: [37, "r"]
};

function each(segments, fn) {
  for (const [ox, oy, sx, sy, data] of segments) {
    for (const item of data.split(",")) {
      const v = item.split(" ");
      fn(ox + v[0] / sx, v.slice(1).map((n) => (isNaN(n) ? n : oy + n / sy)));
    }
  }
}

function drawCandles() {
  let out = "";
  each(candles, (x, [top, bottom, c]) => {
    out += `<rect x="${(x - 1.4).toFixed(1)}" y="${top.toFixed(1)}" width="2.8" height="${(bottom - top).toFixed(1)}" fill="${c === "r" ? UP : DOWN}"/>`;
  });
  document.getElementById("candles").innerHTML = out;
}

function drawLines(id, lines) {
  let out = "";
  for (const color in lines) {
    const pts = [];
    each(lines[color], (x, [y]) => pts.push(x.toFixed(1) + "," + y.toFixed(1)));
    out += `<polyline points="${pts.join(" ")}" stroke="${color}"/>`;
  }
  document.getElementById(id).innerHTML = out;
}

// quiet minutes have no entry of their own and get a low bar
function quietBar(col, x) {
  let h = 3 + ((col * 7) % 4);
  if (x > 390 && x < 460) h = 8 + ((col * 5) % 5);
  if (x > 635 && x < 690) h = 6 + ((col * 5) % 4);
  if (x > 795 && x < 905) h = 2;
  if (x > 915) h = 4 + (x - 915) / 12;
  return [h, (col * col + col * 3) % 7 < 3 ? "r" : "g"];
}

function drawVolumes() {
  let out = "";
  for (let col = 3; col <= 327; col++) {
    const x = col * 3 + 1;
    const [h, c] = volumes[col] || quietBar(col, x);
    out += `<rect x="${x}" y="${(BASE - h).toFixed(1)}" width="3" height="${h.toFixed(1)}" fill="${c === "r" ? "#aa353c" : "#0a7a2e"}"/>`;
  }
  document.getElementById("volumes").innerHTML = out;
}

drawCandles();
drawLines("mas", mas);
drawVolumes();
drawLines("volmas", volMas);
```
